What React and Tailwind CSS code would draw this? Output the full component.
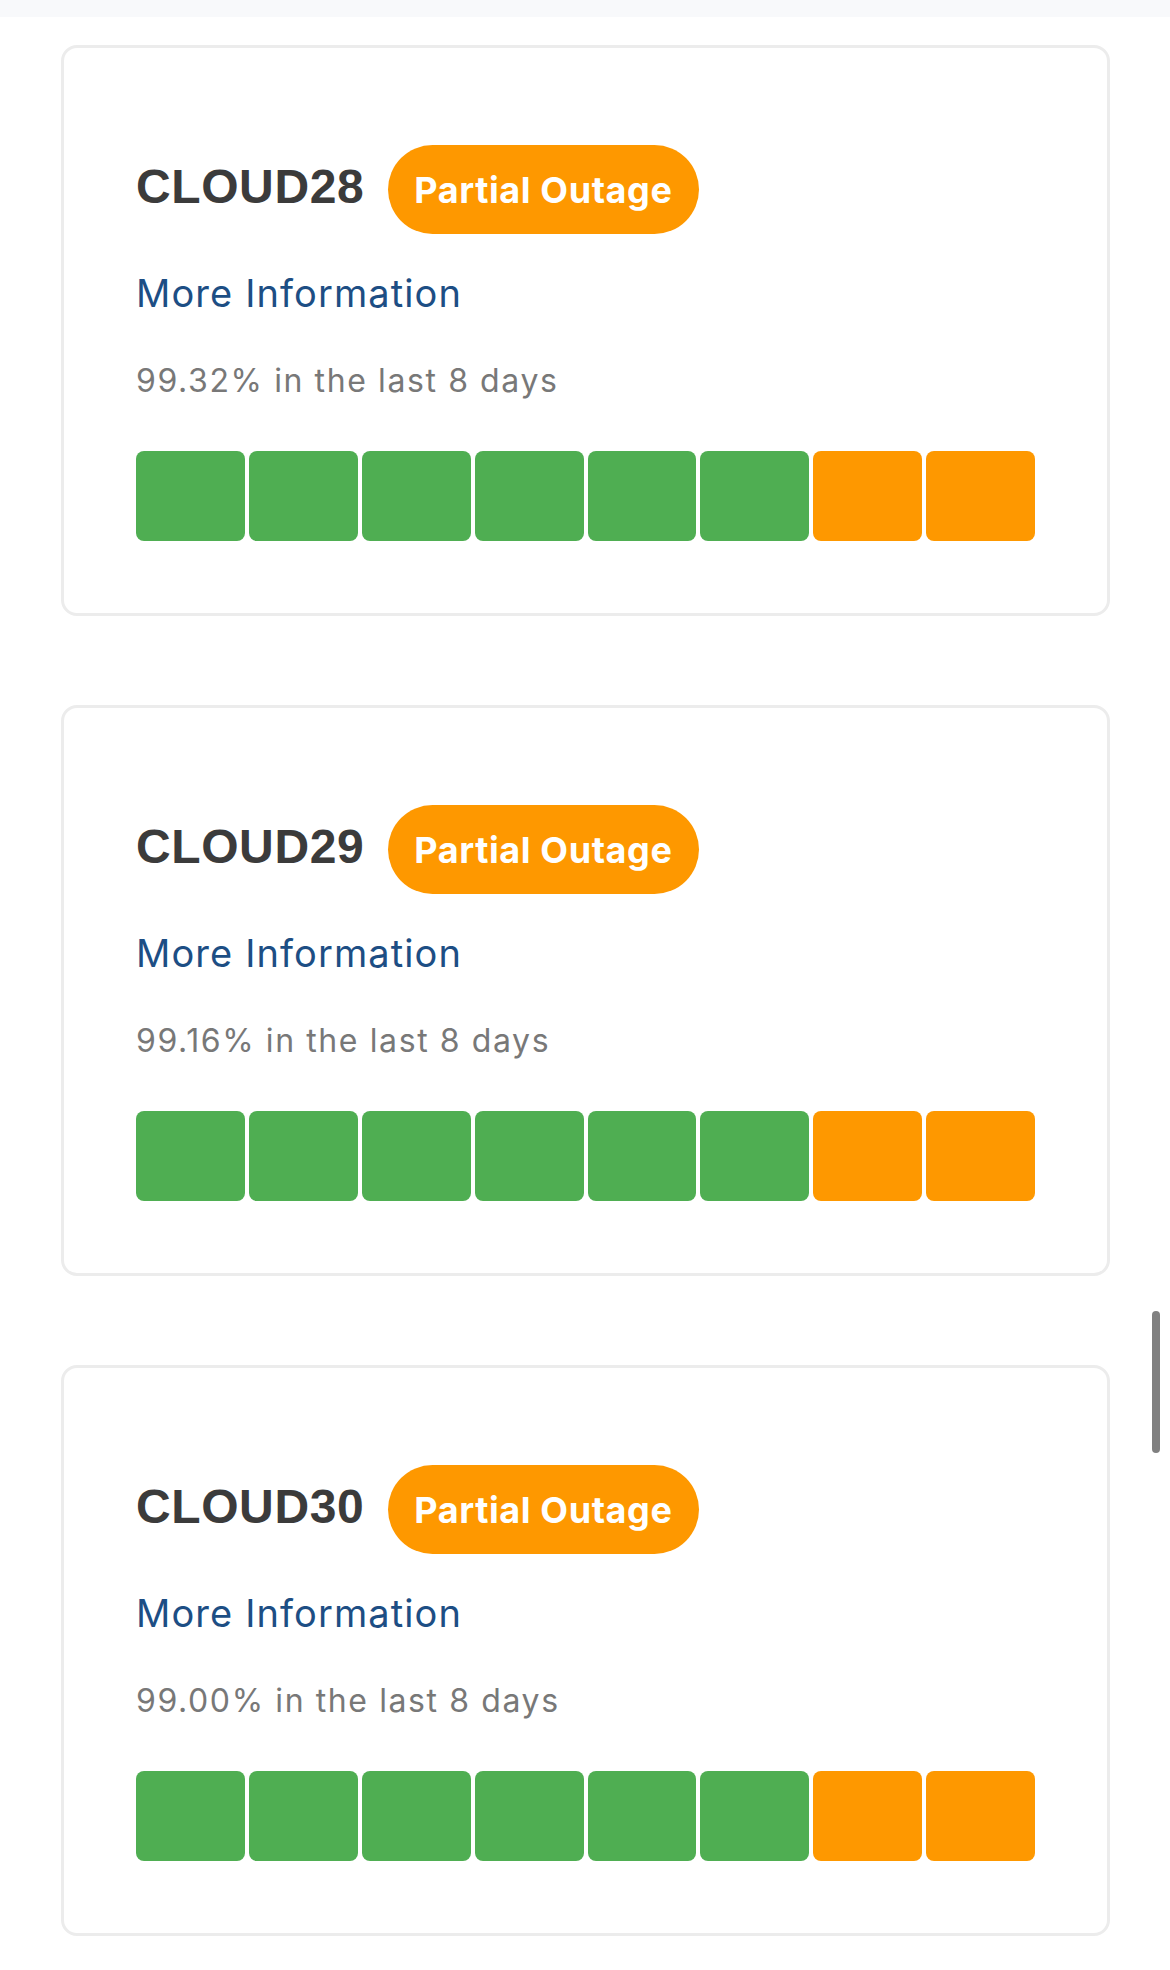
import React from 'react';

const services = [
  { name: 'CLOUD28', uptime: '99.32%' },
  { name: 'CLOUD29', uptime: '99.16%' },
  { name: 'CLOUD30', uptime: '99.00%' },
];

// 8 days of history, last two with partial outage
const days = ['ok', 'ok', 'ok', 'ok', 'ok', 'ok', 'partial', 'partial'];

function UptimeBars() {
  return (
    <div className="mt-[51px] flex h-[90px] gap-[4px]">
      {days.map((d, i) => (
        <div
          key={i}
          className={
            d === 'ok'
              ? 'flex-1 rounded-[8px] bg-[#4fae52]'
              : 'flex-1 rounded-[8px] bg-[#fe9800]'
          }
        />
      ))}
    </div>
  );
}

function ServiceCard({ name, uptime }) {
  return (
    <div className="rounded-[16px] border-[3px] border-[#ececec] bg-white pt-[97px] pb-[72px] pl-[72px] pr-[72px]">
      <div className="flex items-baseline gap-[24px]">
        <h2 className="font-['Liberation_Sans',Arial,sans-serif] text-[48px] font-bold leading-none tracking-[0.6px] text-[#3b3b3b]">
          {name}
        </h2>
        <span className="flex h-[89px] items-center rounded-full bg-[#fe9800] px-[26px] font-['Inter',sans-serif] text-[36px] font-bold tracking-[0.6px] text-white">
          Partial Outage
        </span>
      </div>

      <a href="#" className="mt-[36px] block font-['Inter',sans-serif] text-[38px] leading-[46px] tracking-[1.1px] text-[#1d4e84]">
        More Information
      </a>

      <p className="mt-[45px] font-['Inter',sans-serif] text-[32px] leading-[39px] tracking-[1.6px] text-[#787878]">
        {uptime} in the last 8 days
      </p>

      <UptimeBars />
    </div>
  );
}

export default function App() {
  return (
    <div className="relative min-h-[1970px] w-full overflow-hidden bg-white">
      <div className="h-[17px] bg-[#f8f9fb]" />

      <div className="ml-[61px] mr-[60px] mt-[28px] flex flex-col gap-[89px]">
        {services.map((s) => (
          <ServiceCard key={s.name} name={s.name} uptime={s.uptime} />
        ))}
      </div>

      {/* scroll indicator */}
      <div className="absolute left-[1152px] top-[1311px] h-[142px] w-[8px] rounded-full bg-[#808080]" />
    </div>
  );
}
